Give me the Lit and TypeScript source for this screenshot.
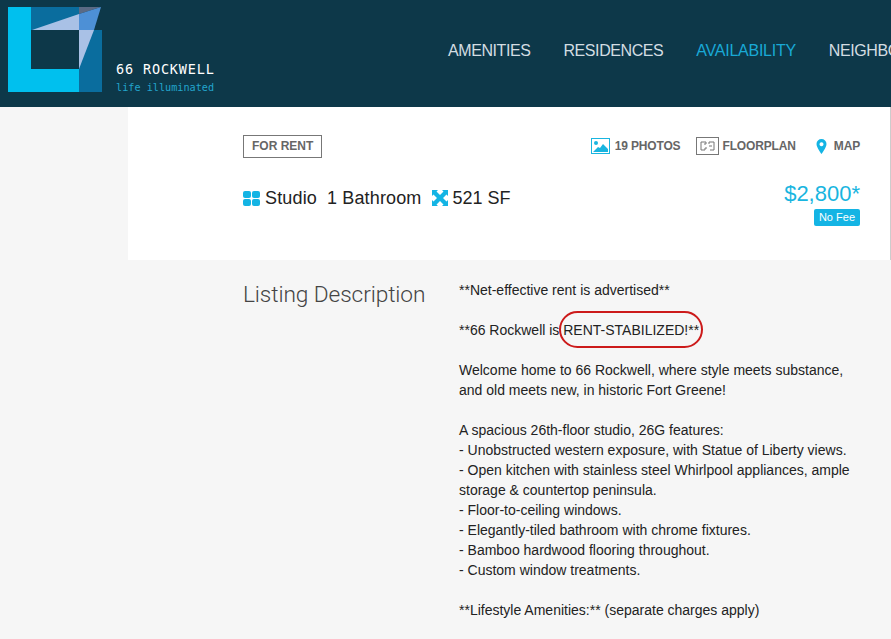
import { LitElement, html, css } from "lit";
import { customElement } from "lit/decorators.js";

const paras = [
  ["**Net-effective rent is advertised**"],
  ["**66 Rockwell is RENT-STABILIZED!**"],
  ["Welcome home to 66 Rockwell, where style meets substance,", "and old meets new, in historic Fort Greene!"],
  ["A spacious 26th-floor studio, 26G features:", "- Unobstructed western exposure, with Statue of Liberty views.", "- Open kitchen with stainless steel Whirlpool appliances, ample", "storage & countertop peninsula.", "- Floor-to-ceiling windows.", "- Elegantly-tiled bathroom with chrome fixtures.", "- Bamboo hardwood flooring throughout.", "- Custom window treatments."],
  ["**Lifestyle Amenities:** (separate charges apply)"],
];

@customElement("app-root")
export class AppRoot extends LitElement {
  static styles = css`
    :host { display: block; height: 639px; overflow: hidden; background: #f6f6f6; font-family: "Liberation Sans", Arial, sans-serif; position: relative; }
    .top { height: 107px; background: #0d3849; display: flex; overflow: hidden; }
    .logo { width: 103px; height: 86px; margin: 7px 0 0 8px; flex: none; display: block; }
    .brand { margin: 61px 0 0 5px; flex: none; width: 332px; }
    .name { font-family: "DejaVu Sans Mono", monospace; font-size: 13.5px; line-height: 16px; color: #fff; letter-spacing: .85px; }
    .tag { font-family: "DejaVu Sans Mono", monospace; font-size: 10.2px; line-height: 14px; color: #22a5cd; margin-top: 4px; }
    .nav { display: flex; gap: 33px; font-size: 16px; letter-spacing: -.42px; color: #d3dde2; padding-top: 42px; white-space: nowrap; }
    .nav .on { color: #19a9d6; letter-spacing: -.25px; }
    .card { margin-left: 128px; height: 153px; background: #fff; padding: 27px 30px 0 115px; box-sizing: border-box; border-right: 1px solid #ccc; }
    .row1 { display: flex; justify-content: space-between; align-items: center; height: 24px; }
    .tagbox { border: 1px solid #777; font-size: 12px; font-weight: bold; color: #666; padding: 0 8px; height: 23px; line-height: 21px; box-sizing: border-box; }
    .actions { display: flex; align-items: center; font-size: 12px; font-weight: bold; color: #666; letter-spacing: -.15px; }
    .actions span { display: flex; align-items: center; gap: 4px; }
    .actions .photos { gap: 5px; }
    .actions .floor { margin-left: 16px; gap: 3px; }
    .map { margin-left: 20px; }
    .map b { margin-left: 3px; }
    .row2 { display: flex; justify-content: space-between; margin-top: 28px; }
    .facts { display: flex; align-items: center; font-size: 18px; letter-spacing: .15px; color: #222; height: 24px; }
    .gap5 { margin-left: 5px; }
    .gap10 { margin-left: 10px; }
    .expand { margin: 0 5px 0 10px; }
    .size { letter-spacing: 0; }
    .price { text-align: right; margin-top: -5px; }
    .amt { font-size: 22px; color: #19b5e0; line-height: 26px; }
    .fee { display: inline-block; background: #14b4e4; color: #fff; font-size: 11px; line-height: 17px; padding: 0 5px; border-radius: 2px; margin-top: 2px; }
    .desc { display: flex; padding: 19px 0 0 243px; }
    h2 { margin: 0; width: 216px; font-family: Roboto, "Liberation Sans", sans-serif; font-size: 22.7px; font-weight: 300; color: #444; line-height: 32px; height: 30px; flex: none; letter-spacing: -.1px; }
    .text { font-size: 14px; line-height: 20px; color: #222; white-space: nowrap; padding-top: 1px; }
    .text p { margin: 0 0 20px; }
    .ring { position: absolute; left: 559px; top: 311px; width: 144px; height: 37px; border: 2px solid #cc1a1a; border-radius: 19px; box-sizing: border-box; }
  `;
  render() {
    return html`
      <div class="top">
        <svg class="logo" viewBox="0 0 103 86">
          <rect x="0" y="0" width="94" height="85" fill="#00c0ee"/>
          <rect x="23" y="0" width="71" height="62" fill="#0a6d9e"/>
          <rect x="71" y="23" width="23" height="62" fill="#0a6d9e"/>
          <rect x="23" y="23" width="48" height="39" fill="#0d3849"/>
          <polygon points="71,0 94,0 94,23 71,23" fill="#0d3849"/>
          <polygon points="71,0 93,0 71,7" fill="#5a6a85"/>
          <polygon points="24,23 71,7 71,23" fill="#a9c1e6"/>
          <polygon points="71,7 93,0 86,23 71,23" fill="#4d90d6"/>
          <polygon points="71,23 86,23 71,62" fill="#a9c1e6"/>
        </svg>
        <div class="brand"><div class="name">66 ROCKWELL</div><div class="tag">life illuminated</div></div>
        <div class="nav"><span>AMENITIES</span><span>RESIDENCES</span><span class="on">AVAILABILITY</span><span>NEIGHBORHOOD</span></div>
      </div>
      <div class="card">
        <div class="row1">
          <div class="tagbox">FOR RENT</div>
          <div class="actions">
            <span class="photos">
              <svg width="19" height="16" viewBox="0 0 19 16"><rect x=".5" y=".5" width="18" height="15" fill="#fff" stroke="#19b5e0"/><circle cx="5" cy="5" r="2" fill="#19b5e0"/><path d="M2 14 L7 9 L9 10 L12 6 L17 11 V14Z" fill="#19b5e0"/></svg>
              19 PHOTOS
            </span>
            <span class="floor">
              <svg width="23" height="18" viewBox="0 0 23 18" fill="none" stroke="#777"><rect x=".5" y=".5" width="22" height="17"/><path d="M5 5h5v2h-2M5 5v8h4v-2h2M13 5h5v8h-4M13 5v2M13 9h3"/></svg>
              FLOORPLAN
            </span>
            <span class="map">
              <svg width="11" height="15" viewBox="0 0 11 15"><path fill-rule="evenodd" d="M5.5 0a5 5 0 0 1 5 5c0 3.5-5 10-5 10s-5-6.500-5-10a5 5 0 0 1 5-5zM5.500 3.200a2 2 0 1 0 .01 0z" fill="#14b4e4"/></svg>
              <b>MAP</b>
            </span>
          </div>
        </div>
        <div class="row2">
          <div class="facts">
            <svg width="17" height="15" viewBox="0 0 17 15" fill="#14b4e4"><rect width="8" height="7" rx="2"/><rect x="9" width="8" height="7" rx="2"/><rect y="8" width="8" height="7" rx="2"/><rect x="9" y="8" width="8" height="7" rx="2"/></svg>
            <span class="gap5">Studio</span><span class="gap10">1 Bathroom</span>
            <svg class="expand" width="16" height="16" viewBox="0 0 16 16" fill="#14b4e4"><path d="M0 0h6L4.500 1.500 8 5l3.500-3.500L10 0h6v6l-1.500-1.500L11 8l3.500 3.500L16 10v6h-6l1.500-1.500L8 11l-3.500 3.500L6 16H0v-6l1.500 1.500L5 8 1.500 4.500 0 6z"/></svg>
            <span class="size">521 SF</span>
          </div>
          <div class="price"><div class="amt">$2,800*</div><span class="fee">No Fee</span></div>
        </div>
      </div>
      <div class="desc">
        <h2>Listing Description</h2>
        <div class="text">${paras.map((p) => html`<p>${p.map((l) => html`${l}<br>`)}</p>`)}</div>
      </div>
      <div class="ring"></div>
    `;
  }
}
